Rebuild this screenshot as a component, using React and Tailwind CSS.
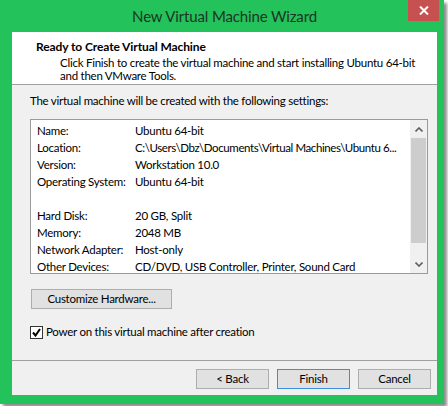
import React from 'react';

const settings = [
    ['Name:', 'Ubuntu 64-bit'],
    ['Location:', 'C:\\Users\\Dbz\\Documents\\Virtual Machines\\Ubuntu 6...'],
    ['Version:', 'Workstation 10.0'],
    ['Operating System:', 'Ubuntu 64-bit'],
    [null, null],
    ['Hard Disk:', '20 GB, Split'],
    ['Memory:', '2048 MB'],
    ['Network Adapter:', 'Host-only'],
    ['Other Devices:', 'CD/DVD, USB Controller, Printer, Sound Card'],
];

const WinButton = ({ children, primary, className = '' }) => (
    <button
        type="button"
        className={`h-[20px] bg-[#e1e1e1] border text-[11.5px] tracking-[-0.25px] leading-none text-black ${primary ? 'border-[#3c8fde]' : 'border-[#adadad]'} ${className}`}
    >
        {children}
    </button>
);

const App = () => {
    return (
        <div className="w-[448px] h-[406px] bg-white font-['Lato',sans-serif] text-black">
            <div className="w-[444px] h-[404px] bg-[#23c25a] flex flex-col shadow-[3px_3px_3px_rgba(0,0,0,0.45)]">
                {/* title bar */}
                <div className="h-[32px] relative flex items-center justify-center pl-[5px]">
                    <span className="text-[15px] tracking-[-0.15px] text-[#1c3526]">New Virtual Machine Wizard</span>
                    <div className="absolute top-0 right-[5px] w-[31px] h-[21px] bg-[#c75050] flex items-center justify-center">
                        <svg width="10" height="9" viewBox="0 0 10 9">
                            <path d="M1 0.5 L9 8.5 M9 0.5 L1 8.5" stroke="white" strokeWidth="2" />
                        </svg>
                    </div>
                </div>

                <div className="ml-[12px] mr-[7px] mb-[9px] flex-1 flex flex-col bg-[#f0f0f0] text-[11.5px] tracking-[-0.25px]">
                    {/* header */}
                    <div className="bg-white h-[53px] border-b border-[#a0a0a0] pl-[24px] pt-[7px]">
                        <div className="text-[12px] tracking-[-0.1px] font-bold leading-[15px]">Ready to Create Virtual Machine</div>
                        <div className="pl-[24px] leading-[13px] mt-[2px] whitespace-nowrap">
                            Click Finish to create the virtual machine and start installing Ubuntu 64-bit
                            <br />
                            and then VMware Tools.
                        </div>
                    </div>

                    {/* body */}
                    <div className="flex-1 flex flex-col px-[18px] pt-[8px]">
                        <div className="leading-[15px] whitespace-nowrap">The virtual machine will be created with the following settings:</div>

                        <div className="mt-[11px] w-[398px] h-[155px] border border-[#9a9a9a] bg-white flex">
                            <div className="flex-1 pl-[6px] pt-[2px]">
                                {settings.map(([label, value], i) => (
                                    <div key={i} className="flex h-[17px] items-center whitespace-nowrap">
                                        <span className="w-[98px] shrink-0">{label}</span>
                                        <span className={i === 1 ? 'tracking-[-0.4px]' : ''}>{value}</span>
                                    </div>
                                ))}
                            </div>
                            <div className="w-[17px] bg-[#f0f0f0] flex flex-col">
                                <div className="h-[18px] flex items-center justify-center">
                                    <svg width="8" height="5" viewBox="0 0 8 5">
                                        <path d="M0.5 4.5 L4 1 L7.5 4.5" stroke="#606060" strokeWidth="1.6" fill="none" />
                                    </svg>
                                </div>
                                <div className="mx-[1px] h-[105px] bg-[#cdcdcd]" />
                                <div className="flex-1" />
                                <div className="h-[18px] flex items-center justify-center">
                                    <svg width="8" height="5" viewBox="0 0 8 5">
                                        <path d="M0.5 0.5 L4 4 L7.5 0.5" stroke="#606060" strokeWidth="1.6" fill="none" />
                                    </svg>
                                </div>
                            </div>
                        </div>

                        <WinButton className="mt-[15px] ml-[1px] w-[141px]">Customize Hardware...</WinButton>

                        <label className="mt-[16px] flex items-center gap-[3px] leading-[14px]">
                            <span className="w-[13px] h-[13px] border border-[#333] bg-white flex items-center justify-center">
                                <svg width="9" height="9" viewBox="0 0 9 9">
                                    <path d="M1 4.5 L3.5 7.5 L8 1" stroke="black" strokeWidth="2" fill="none" />
                                </svg>
                            </span>
                            Power on this virtual machine after creation
                        </label>
                    </div>

                    {/* footer */}
                    <div className="border-t border-[#a0a0a0] h-[35px] flex items-start justify-end gap-[8px] pt-[8px] pr-[6px]">
                        <WinButton className="w-[73px]">&lt; Back</WinButton>
                        <WinButton primary className="w-[73px]">Finish</WinButton>
                        <WinButton className="w-[73px]">Cancel</WinButton>
                    </div>
                </div>
            </div>
        </div>
    );
};

export default App;
